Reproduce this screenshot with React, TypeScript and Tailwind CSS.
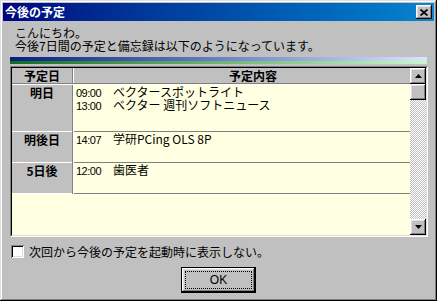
import React from "react";

const jp = "font-['Noto_Sans_CJK_JP','Noto_Sans_CJK_SC',sans-serif]";

const raised =
  "shadow-[inset_-1px_-1px_#000,inset_1px_1px_#fff,inset_-2px_-2px_#808080,inset_2px_2px_#dfdfdf]";

const UpArrow = () => (
  <svg width="7" height="4" viewBox="0 0 7 4">
    <polygon points="3.5,0 7,4 0,4" fill="#000" />
  </svg>
);

const DownArrow = () => (
  <svg width="7" height="4" viewBox="0 0 7 4">
    <polygon points="0,0 7,0 3.5,4" fill="#000" />
  </svg>
);

const rows = [
  {
    day: "明日",
    h: "h-[47px]",
    items: [
      ["09:00", "ベクタースポットライト"],
      ["13:00", "ベクター 週刊ソフトニュース"],
    ],
  },
  { day: "明後日", h: "h-[31px]", items: [["14:07", "学研PCing OLS 8P"]] },
  { day: "5日後", h: "h-[31px]", items: [["12:00", "歯医者"]] },
];

export default function App() {
  return (
    <div
      className={`w-[437px] h-[301px] bg-[#c0c0c0] p-[3px] flex flex-col text-black ${jp} shadow-[inset_-1px_-1px_#000,inset_1px_1px_#dfdfdf,inset_-2px_-2px_#808080,inset_2px_2px_#fff]`}
    >
      {/* タイトルバー */}
      <div className="h-[18px] flex items-center justify-between pl-[2px] pr-[2px] bg-linear-to-r from-[#000080] to-[#1084d0]">
        <span className="text-white font-bold text-[12px] leading-[14px]">今後の予定</span>
        <button className={`w-[16px] h-[14px] bg-[#c0c0c0] flex items-center justify-center ${raised}`}>
          <svg width="8" height="7" viewBox="0 0 8 7">
            <path d="M0.5 0.5 L7.5 6.5 M7.5 0.5 L0.5 6.5" stroke="#000" strokeWidth="1.8" />
          </svg>
        </button>
      </div>

      <div className="px-[7px] flex flex-col">
        <div className="pl-[5px] mt-[5px] text-[12px] leading-[13px]">
          <p>こんにちわ。</p>
          <p>今後7日間の予定と備忘録は以下のようになっています。</p>
        </div>

        {/* 区切りバー */}
        <div className="mt-[5px] w-[417px]">
          <div className="h-[4px] bg-linear-to-r from-[#0c1c80] to-[#dce4ff]" />
          <div className="h-[3px] bg-linear-to-r from-[#007020] to-[#c8f8c8]" />
        </div>

        {/* 予定リスト */}
        <div className="mt-[2px] w-[418px] h-[171px] border border-t-[#808080] border-l-[#808080] border-b-white border-r-white">
          <div className="h-full border border-t-black border-l-black border-b-[#dfdfdf] border-r-[#dfdfdf] flex">
            <div className="flex-1 flex flex-col bg-[#ffffe1]">
              <div className="flex bg-[#c0c0c0] text-[12px] font-bold leading-[15px] border-b border-[#808080]">
                <div className="w-[60px] text-center">予定日</div>
                <div className="w-px bg-[#808080]" />
                <div className="w-px bg-white" />
                <div className="flex-1 text-center pl-[22px]">予定内容</div>
              </div>
              <div className="h-px bg-white" />
              {rows.map((r) => (
                <div key={r.day} className={`flex ${r.h}`}>
                  <div className="w-[60px] bg-[#c0c0c0] border-b border-white text-center font-bold text-[12px] leading-[13px] pt-[1px]">
                    {r.day}
                  </div>
                  <div className="w-px bg-[#808080]" />
                  <div className="w-px bg-white" />
                  <div className="flex-1 border-b border-[#808080] pl-[2px] pt-[1px] text-[12px] leading-[12px]">
                    {r.items.map(([t, s]) => (
                      <div key={t} className="flex items-baseline">
                        <span className="w-[37px] text-[11px] font-['Liberation_Sans',sans-serif] tracking-[-0.5px]">
                          {t}
                        </span>
                        <span>{s}</span>
                      </div>
                    ))}
                  </div>
                </div>
              ))}
            </div>

            {/* スクロールバー */}
            <div className="w-[16px] flex flex-col bg-[image:repeating-conic-gradient(#c0c0c0_0%_25%,#ffffff_0%_50%)] bg-[length:2px_2px]">
              <div className={`h-[16px] bg-[#c0c0c0] flex items-center justify-center ${raised}`}>
                <UpArrow />
              </div>
              <div className={`h-[16px] bg-[#c0c0c0] ${raised}`} />
              <div className="flex-1" />
              <div className={`h-[16px] bg-[#c0c0c0] flex items-center justify-center ${raised}`}>
                <DownArrow />
              </div>
            </div>
          </div>
        </div>

        {/* チェックボックス */}
        <div className="mt-[8px] pl-[1px] flex items-center h-[13px]">
          <div className="w-[13px] h-[13px] bg-white shadow-[inset_1px_1px_#808080,inset_-1px_-1px_#fff,inset_2px_2px_#000,inset_-2px_-2px_#dfdfdf]" />
          <span className="ml-[5px] text-[12px] leading-[13px]">次回から今後の予定を起動時に表示しない。</span>
        </div>

        {/* OKボタン */}
        <div className="mt-[9px] flex justify-center pr-[0px]">
          <button className="w-[75px] h-[26px] border border-black bg-[#c0c0c0]">
            <div className={`w-full h-full p-[3px] ${raised}`}>
              <div className="w-full h-full border border-dotted border-black flex items-center justify-center text-[12px] font-['Liberation_Sans',sans-serif]">
                OK
              </div>
            </div>
          </button>
        </div>
      </div>
    </div>
  );
}
